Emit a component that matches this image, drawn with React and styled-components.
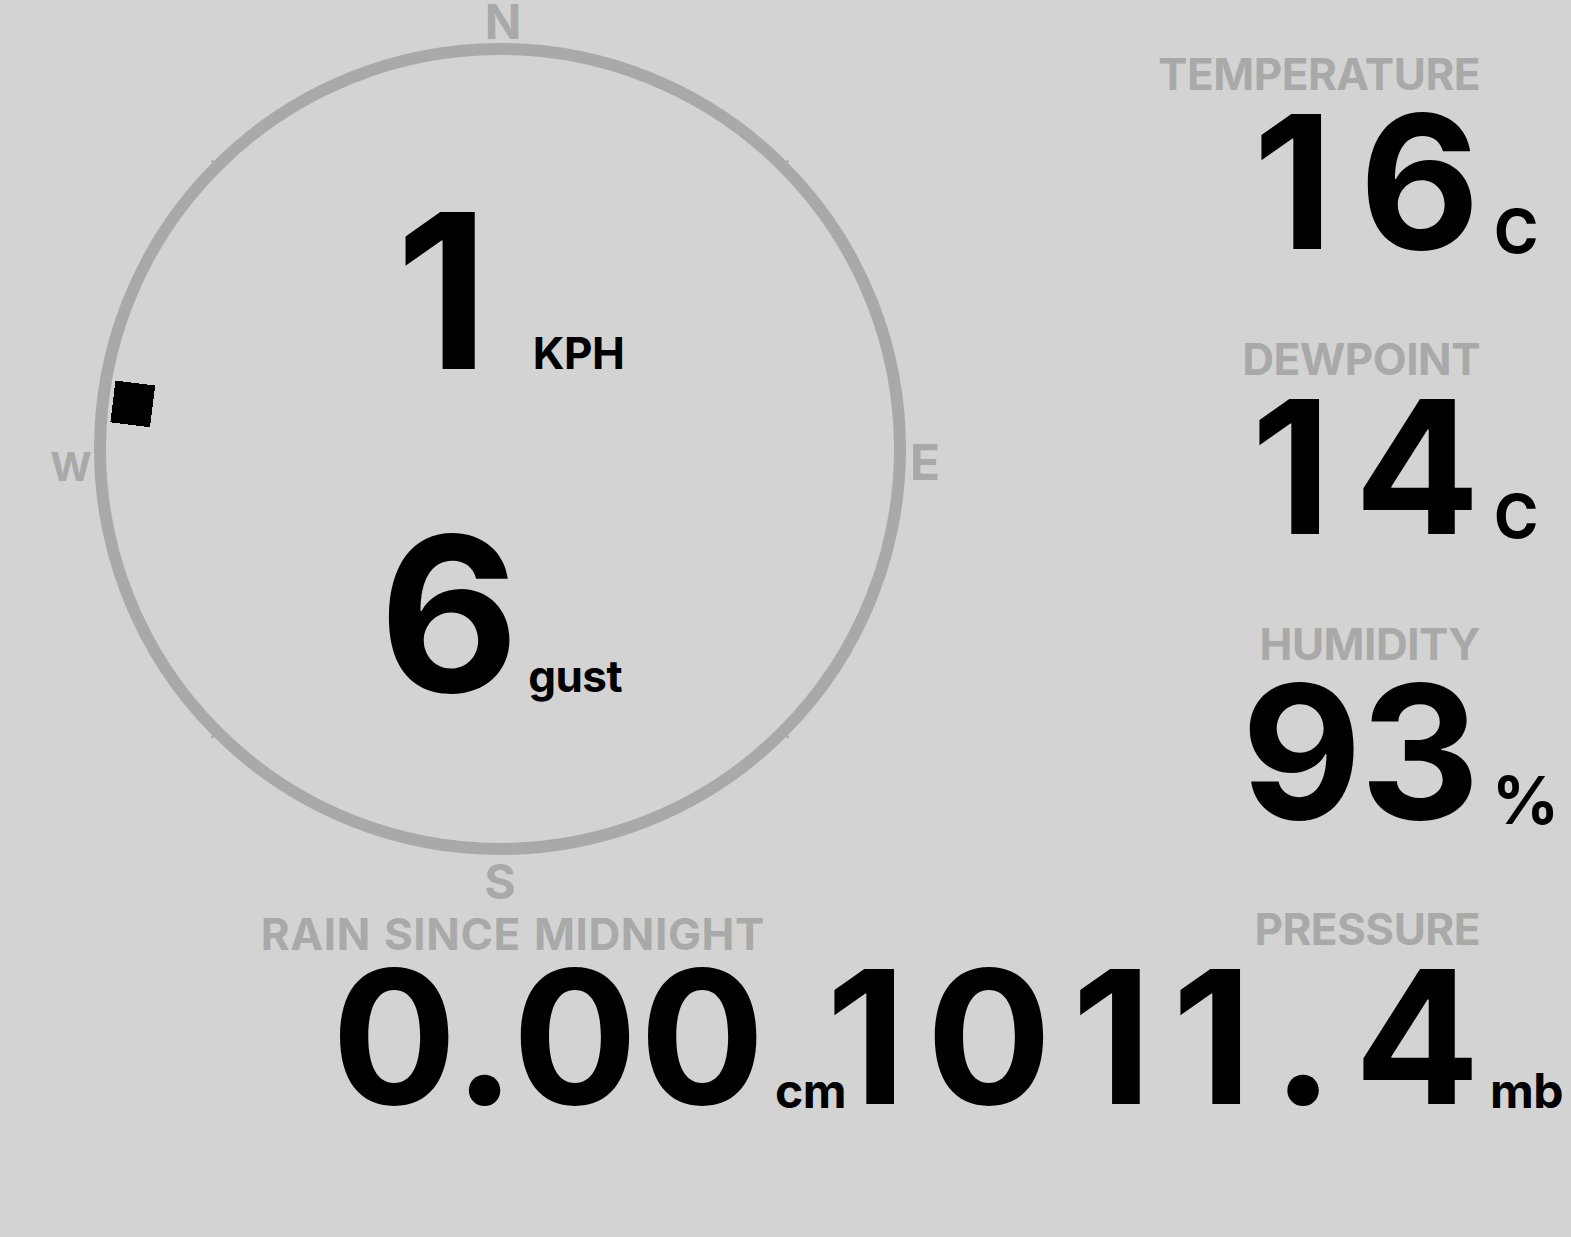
import React from 'react';
import styled, { createGlobalStyle } from 'styled-components';

const GlobalStyle = createGlobalStyle`
  html, body {
    margin: 0;
    padding: 0;
    background: #d3d3d3;
  }
  body {
    font-family: Inter, "Noto Sans", "DejaVu Sans", sans-serif;
    overflow: hidden;
  }
`;

const Page = styled.main`
  display: flex;
  width: 1571px;
  height: 1237px;
  background: #d3d3d3;
  overflow: hidden;
`;

const LeftColumn = styled.div`
  flex: 0 0 1000px;
  display: flex;
  flex-direction: column;
`;

const RightColumn = styled.div`
  flex: 1;
  min-width: 0;
  display: flex;
  flex-direction: column;
  align-items: flex-end;
  padding-top: 52px;
  gap: 69px;
`;

const Compass = styled.div`
  position: relative;
  width: 1000px;
  height: 912px;
  display: flex;
  flex-direction: column;
  align-items: center;
  padding-top: 183px;
  gap: 107px;
  box-sizing: border-box;
`;

const Dial = styled.svg`
  position: absolute;
  inset: 0;
`;

const Reading = styled.div`
  position: relative;
  display: flex;
  align-items: baseline;
  gap: ${(p) => p.$gap}px;
  margin-left: ${(p) => p.$shift || 0}px;
  font-weight: 700;
  color: #000;
`;

const Speed = styled.span`
  font-size: 216px;
  line-height: 1;
`;

const SpeedUnit = styled.span`
  font-size: ${(p) => p.$size}px;
  line-height: 1;
  letter-spacing: -0.5px;
`;

const StatGrid = styled.div`
  display: grid;
  grid-template-columns: auto ${(p) => p.$unitWidth}px;
  align-items: baseline;
  margin-right: ${(p) => p.$offset || 0}px;
  align-self: flex-end;
`;

const Label = styled.div`
  grid-column: 1;
  justify-self: end;
  font-size: 44px;
  line-height: 44px;
  font-weight: 700;
  color: #a9a9a9;
  letter-spacing: ${(p) => p.$tracking}px;
  word-spacing: 2px;
  white-space: nowrap;
  margin-bottom: ${(p) => p.$gap || 0}px;
`;

const Value = styled.div`
  grid-column: 1;
  justify-self: end;
  font-size: 186px;
  line-height: 172px;
  font-weight: 700;
  color: #000;
  letter-spacing: ${(p) => p.$tracking}px;
  margin-right: ${(p) => -p.$tracking}px;
  white-space: nowrap;
`;

/* sits at the bottom of the value row, its baseline a little under the number's */
const Unit = styled.div`
  grid-column: 2;
  align-self: end;
  padding-left: ${(p) => p.$pad}px;
  font-size: ${(p) => p.$size}px;
  line-height: calc(0.728em + 28px);
  font-weight: 700;
  color: #000;
  letter-spacing: -0.5px;
  white-space: nowrap;
`;

const Stat = ({
  label,
  value,
  unit,
  tracking = 6,
  labelTracking = -0.5,
  unitSize = 60,
  unitPad = 14,
  labelGap,
  offset,
}) => (
  <StatGrid $unitWidth={91} $offset={offset}>
    <Label $gap={labelGap} $tracking={labelTracking}>
      {label}
    </Label>
    <span />
    <Value $tracking={tracking}>{value}</Value>
    <Unit $size={unitSize} $pad={unitPad}>
      {unit}
    </Unit>
  </StatGrid>
);

const CX = 500;
const CY = 449;
const R = 400;

const CompassDial = ({ bearing }) => (
  <Dial width="1000" height="912" viewBox="0 0 1000 912">
    <circle
      cx={CX}
      cy={CY}
      r={R}
      fill="none"
      stroke="#a9a9a9"
      strokeWidth="12"
    />
    {[45, 135, 225, 315].map((a) => (
      <line
        key={a}
        x1={CX}
        y1={CY - R - 8}
        x2={CX}
        y2={CY - R + 2}
        stroke="#a9a9a9"
        strokeWidth="2"
        transform={`rotate(${a} ${CX} ${CY})`}
      />
    ))}
    <rect
      x={CX - 21}
      y={CY - 390}
      width="42"
      height="40"
      fill="#000"
      shapeRendering="crispEdges"
      transform={`rotate(${bearing} ${CX} ${CY})`}
    />
    <g
      fill="#a9a9a9"
      fontWeight="700"
      textAnchor="middle"
      fontFamily="Inter, sans-serif"
    >
      <text x="503" y="39" fontSize="48">N</text>
      <text x="925" y="480" fontSize="50">E</text>
      <text x="500" y="899" fontSize="48">S</text>
      <text x="71" y="481" fontSize="40">W</text>
    </g>
  </Dial>
);

export default function App() {
  return (
    <Page>
      <GlobalStyle />
      <LeftColumn>
        <Compass>
          <CompassDial bearing={277} />
          <Reading $gap={44} $shift={20}>
            <Speed>1</Speed>
            <SpeedUnit $size={44}>KPH</SpeedUnit>
          </Reading>
          <Reading $gap={9} $shift={1}>
            <Speed>6</Speed>
            <SpeedUnit $size={44}>gust</SpeedUnit>
          </Reading>
        </Compass>
        <Stat
          label="RAIN SINCE MIDNIGHT"
          labelTracking={0.6}
          value="0.00"
          tracking={2}
          unit="cm"
          unitSize={48}
          unitPad={10}
          labelGap={-5}
          offset={144}
        />
      </LeftColumn>
      <RightColumn>
        <Stat label="TEMPERATURE" value="16" tracking={26} unit="C" />
        <Stat label="DEWPOINT" value="14" tracking={23} unit="C" />
        <Stat
          label="HUMIDITY"
          value="93"
          tracking={-2}
          unit="%"
          unitSize={66}
          unitPad={12}
        />
        <Stat
          label="PRESSURE"
          value="1011.4"
          tracking={20}
          unit="mb"
          unitSize={48}
          unitPad={10}
        />
      </RightColumn>
    </Page>
  );
}
